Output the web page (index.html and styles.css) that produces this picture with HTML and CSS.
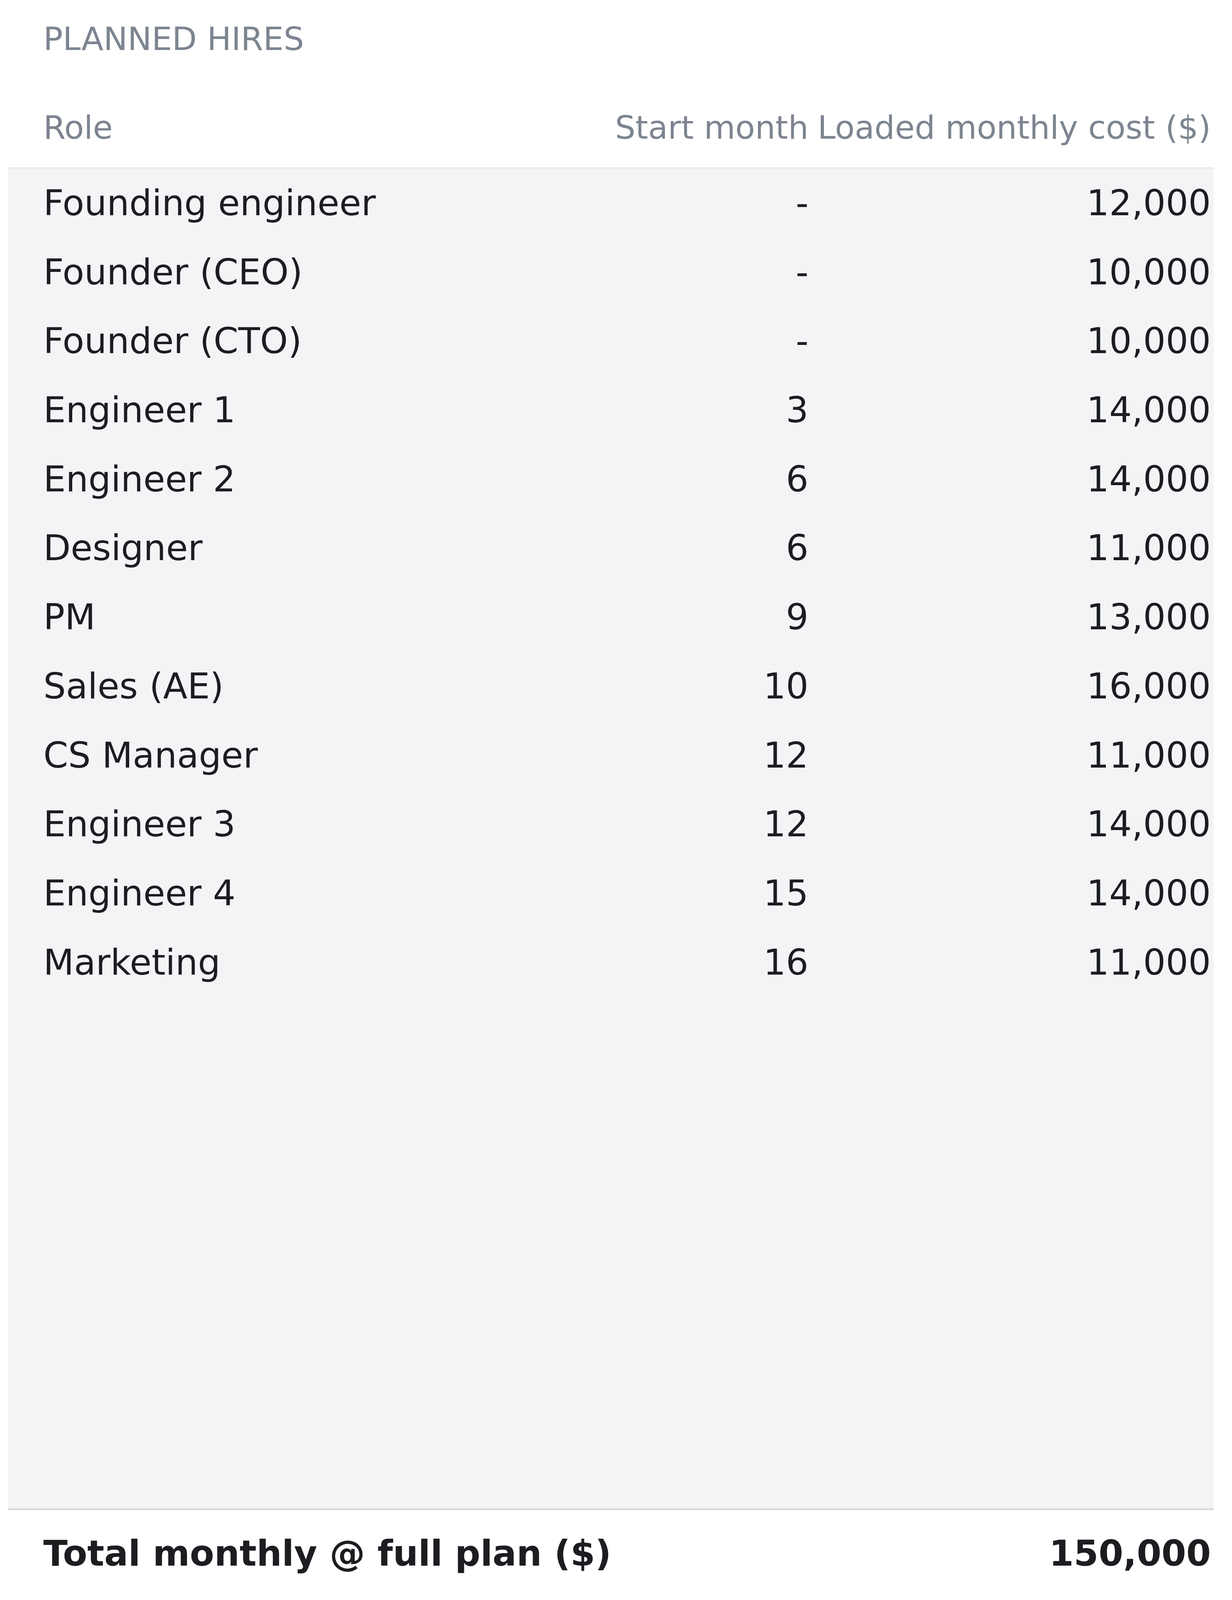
FILE: index.html
```html
<!DOCTYPE html>
<html lang="en">
<head>
<meta charset="utf-8">
<title>Planned hires</title>
<link rel="stylesheet" href="styles.css">
</head>
<body>
<div class="panel">
  <div class="title">PLANNED HIRES</div>
  <div class="row head">
    <span>Role</span>
    <span class="num">Start month</span>
    <span class="num">Loaded monthly cost ($)</span>
  </div>
  <div class="body">
    <div class="row"><span>Founding engineer</span><span class="num">-</span><span class="num">12,000</span></div>
    <div class="row"><span>Founder (CEO)</span><span class="num">-</span><span class="num">10,000</span></div>
    <div class="row"><span>Founder (CTO)</span><span class="num">-</span><span class="num">10,000</span></div>
    <div class="row"><span>Engineer 1</span><span class="num">3</span><span class="num">14,000</span></div>
    <div class="row"><span>Engineer 2</span><span class="num">6</span><span class="num">14,000</span></div>
    <div class="row"><span>Designer</span><span class="num">6</span><span class="num">11,000</span></div>
    <div class="row"><span>PM</span><span class="num">9</span><span class="num">13,000</span></div>
    <div class="row"><span>Sales (AE)</span><span class="num">10</span><span class="num">16,000</span></div>
    <div class="row"><span>CS Manager</span><span class="num">12</span><span class="num">11,000</span></div>
    <div class="row"><span>Engineer 3</span><span class="num">12</span><span class="num">14,000</span></div>
    <div class="row"><span>Engineer 4</span><span class="num">15</span><span class="num">14,000</span></div>
    <div class="row"><span>Marketing</span><span class="num">16</span><span class="num">11,000</span></div>
  </div>
  <div class="total">
    <span>Total monthly @ full plan ($)</span>
    <span>150,000</span>
  </div>
</div>
</body>
</html>
```
FILE: styles.css
```css
html, body {
  margin: 0;
  padding: 0;
  background: #ffffff;
}

body {
  font-family: "DejaVu Sans", "Liberation Sans", sans-serif;
  line-height: normal;
  color: #1b1d21;
}

.panel {
  margin-left: 20px;
  width: 3088px;
  padding-top: 51px;
}

.title {
  font-size: 82.5px;
  color: #7d8491;
  padding-left: 91px;
}

.row {
  display: grid;
  grid-template-columns: 1fr 496px 1009px;
  column-gap: 21.5px;
  padding: 0 7px 0 91px;
  white-space: nowrap;
}

.num {
  text-align: right;
}

.head {
  font-size: 82.5px;
  color: #7d8491;
  margin-top: 131px;
  padding-bottom: 54px;
  border-bottom: 5px solid #eaebed;
}

.body {
  background: #f3f4f6;
  height: 3428px;
  overflow: hidden;
  border-bottom: 5.7px solid #d8dadd;
}

.body .row {
  font-size: 91px;
  color: #1b1d21;
  padding-top: 34px;
  padding-bottom: 37.7px;
}

.total {
  display: flex;
  justify-content: space-between;
  font-size: 91px;
  font-weight: bold;
  color: #1b1d21;
  padding: 58px 7px 0 91px;
}
```
